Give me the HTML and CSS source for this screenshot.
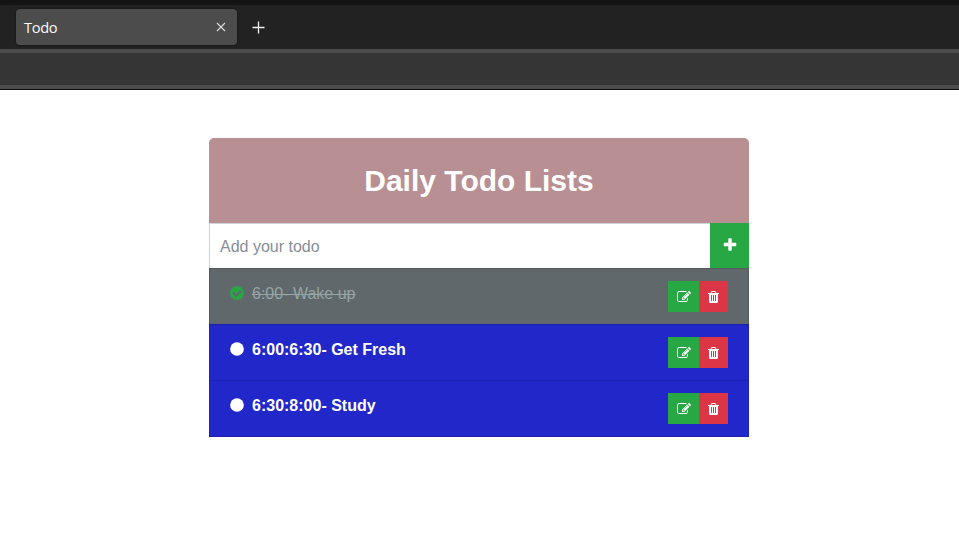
FILE: index.html
```
<!DOCTYPE html>
<html lang="en">
<head>
<meta charset="utf-8">
<title>Todo</title>
<link rel="stylesheet" href="styles.css">
</head>
<body>
<svg class="sprite" aria-hidden="true">
  <symbol id="plus" viewBox="0 0 1792 1792"><path d="M1600 736v192q0 40-28 68t-68 28h-416v416q0 40-28 68t-68 28h-192q-40 0-68-28t-28-68v-416h-416q-40 0-68-28t-28-68v-192q0-40 28-68t68-28h416v-416q0-40 28-68t68-28h192q40 0 68 28t28 68v416h416q40 0 68 28t28 68z"/></symbol>
  <symbol id="check" viewBox="0 0 1792 1792"><path d="M1412 734q0-28-18-46l-91-90q-19-19-45-19t-45 19l-408 407-226-226q-19-19-45-19t-45 19l-91 90q-18 18-18 46 0 27 18 45l362 362q19 19 45 19 27 0 46-19l543-543q18-18 18-45zm252 162q0 209-103 385.5t-279.5 279.5-385.5 103-385.5-103-279.5-279.5-103-385.5 103-385.5 279.5-279.5 385.5-103 385.5 103 279.5 279.5 103 385.5z"/></symbol>
  <symbol id="circle" viewBox="0 0 1792 1792"><circle cx="896" cy="896" r="768"/></symbol>
  <symbol id="edit" viewBox="0 0 1792 1792"><path d="M888 1184l116-116-152-152-116 116v56h96v96h56zm440-720q-16-16-33 1l-350 350q-17 17-1 33t33-1l350-350q17-17 1-33zm80 594v190q0 119-84.5 203.5t-203.5 84.5h-832q-119 0-203.5-84.5t-84.5-203.5v-832q0-119 84.5-203.5t203.5-84.5h832q63 0 117 25 15 7 18 23 3 17-9 29l-49 49q-14 14-32 8-23-6-45-6h-832q-66 0-113 47t-47 113v832q0 66 47 113t113 47h832q66 0 113-47t47-113v-126q0-13 9-22l64-64q15-15 35-7t20 29zm-96-738l288 288-672 672h-288v-288zm444 132l-92 92-288-288 92-92q28-28 68-28t68 28l152 152q28 28 28 68t-28 68z"/></symbol>
  <symbol id="trash" viewBox=".5 .5 14 14"><path fill-rule="evenodd" d="M1.5 3.5h2.6l.6-1.4q.2-.6.9-.6h2.8q.7 0 .9.6l.6 1.4h2.6v1h-1v7.6q0 1.4-1.1 1.4h-6.8q-1.1 0-1.1-1.4v-7.6h-1zM5.1 3.5h3.8l-.5-1h-2.8zM4.5 5.5v6h1v-6zM6.5 5.5v6h1v-6zM8.5 5.5v6h1v-6z"/></symbol>
</svg>
<header class="browser">
  <div class="tabs">
    <div class="tab">
      <span>Todo</span>
      <svg class="close" viewBox="0 0 10 10"><path d="M1 1l8 8M9 1l-8 8"/></svg>
    </div>
    <svg class="new-tab" viewBox="0 0 13 13"><path d="M6.5 .5v12M.5 6.5h12"/></svg>
  </div>
  <div class="toolbar"></div>
</header>
<main class="card">
  <h1 class="title">Daily Todo Lists</h1>
  <form class="add">
    <input class="field" type="text" placeholder="Add your todo">
    <button class="submit" type="button" aria-label="Add"><svg class="icon"><use href="#plus"/></svg></button>
  </form>
  <ul class="list">
    <li class="item done">
      <svg class="icon status"><use href="#check"/></svg>
      <span class="text">6:00- Wake up</span>
      <button class="btn edit" aria-label="Edit"><svg class="icon"><use href="#edit"/></svg></button>
      <button class="btn delete" aria-label="Delete"><svg class="icon"><use href="#trash"/></svg></button>
    </li>
    <li class="item">
      <svg class="icon status"><use href="#circle"/></svg>
      <span class="text">6:00:6:30- Get Fresh</span>
      <button class="btn edit" aria-label="Edit"><svg class="icon"><use href="#edit"/></svg></button>
      <button class="btn delete" aria-label="Delete"><svg class="icon"><use href="#trash"/></svg></button>
    </li>
    <li class="item">
      <svg class="icon status"><use href="#circle"/></svg>
      <span class="text">6:30:8:00- Study</span>
      <button class="btn edit" aria-label="Edit"><svg class="icon"><use href="#edit"/></svg></button>
      <button class="btn delete" aria-label="Delete"><svg class="icon"><use href="#trash"/></svg></button>
    </li>
  </ul>
</main>
</body>
</html>
```
FILE: styles.css
```
* { box-sizing: border-box; }
body {
  margin: 0;
  background: #fff;
  font: 16px/24px "Liberation Sans", Arial, sans-serif;
}
.sprite { display: none; }
.browser { height: 90px; background: #222; }
.tabs {
  display: flex;
  align-items: center;
  height: 49px;
  border-top: 5px solid #141414;
  padding: 0 0 0 16px;
}
.tab {
  display: flex;
  align-items: center;
  justify-content: space-between;
  width: 221px;
  height: 36px;
  padding: 0 11px 0 8px;
  border-radius: 4px;
  background: #4c4c4c;
  box-shadow: 0 0 3px rgba(0, 0, 0, .5);
  color: #f9f9fa;
  font: 14.67px/20px "Open Sans", "Noto Sans", sans-serif;
  letter-spacing: -.35px;
}
.close { width: 10px; height: 10px; fill: none; stroke: #ddd; stroke-width: 1.1; }
.new-tab { width: 13px; height: 13px; margin-left: 15px; fill: none; stroke: #f4f4f4; stroke-width: 1.3; }
.toolbar {
  height: 41px;
  border-top: 4px solid #4c4c4c;
  border-bottom: 1px solid #110d11;
  background: #353535;
  box-shadow: inset 0 -4px #4c4c4c;
}
.card { width: 540px; margin: 48px 0 0 209px; }
.title {
  height: 85px;
  margin: 0;
  border-radius: 5px 5px 0 0;
  background: #b88f93;
  color: #fff;
  font-size: 30px;
  line-height: 86px;
  text-align: center;
}
.add { display: flex; height: 45px; }
.field {
  flex: 1;
  min-width: 0;
  padding: 2px 10px 0;
  border: 1px solid #ced4da;
  border-width: 1px 0 0 1px;
  border-radius: 0;
  background: #fff;
  font: inherit;
}
.field::placeholder { color: #868e96; opacity: 1; }
.icon { display: block; width: 14px; height: 14px; fill: currentColor; }
.submit {
  display: flex;
  align-items: center;
  justify-content: center;
  width: 39px;
  padding: 0 0 1px;
  border: 0;
  background: #28a745;
  color: #fff;
}
.submit .icon, .status { width: 16px; height: 16px; }
.list { margin: 0; padding: 0; list-style: none; }
.item {
  display: flex;
  height: 57px;
  padding: 12px 20px 0 19px;
  border: 1px solid rgba(0, 0, 0, .125);
  background: #2127c8;
  color: #fff;
  font-weight: bold;
}
.item + .item { margin-top: -1px; }
.status { margin-top: 4px; }
.text { flex: 1; margin-left: 7px; padding-top: 1px; }
.done { background: #60686b; font-weight: normal; }
.done .status { color: #28a745; }
.done .text { color: #95a5a6; text-decoration: line-through; }
.btn {
  display: flex;
  align-items: center;
  justify-content: center;
  height: 31px;
  padding: 0;
  border: 0;
  color: #fff;
}
.edit { width: 31px; padding-left: 1px; background: #28a745; }
.delete { width: 29px; background: #dc3545; }
.delete .icon { width: 15px; height: 15px; padding: 1px 0 0 1px; }
```
